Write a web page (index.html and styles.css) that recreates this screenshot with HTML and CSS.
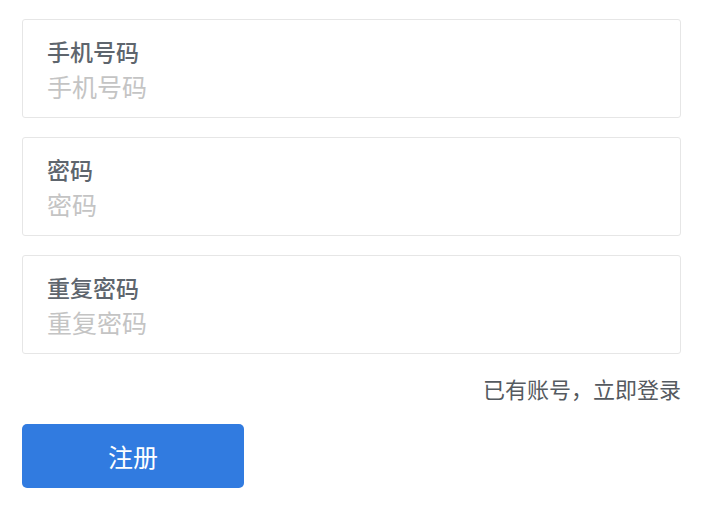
FILE: index.html
```html
<!DOCTYPE html>
<html lang="zh-CN">
<head>
    <meta charset="UTF-8">
    <meta name="viewport" content="width=device-width, initial-scale=1.0">
    <title>注册</title>
    <link rel="stylesheet" href="styles.css">
</head>
<body>

    <form class="register">
        <label class="field">
            <span class="field-label">手机号码</span>
            <input type="text" placeholder="手机号码">
        </label>
        <label class="field">
            <span class="field-label">密码</span>
            <input type="password" placeholder="密码">
        </label>
        <label class="field">
            <span class="field-label">重复密码</span>
            <input type="password" placeholder="重复密码">
        </label>

        <div class="login-link">已有账号，立即登录</div>

        <button type="button">注册</button>
    </form>

</body>
</html>
```

FILE: styles.css
```css
body {
    margin: 0;
    background: #fff;
    font-family: "Noto Sans CJK SC", "Noto Sans", sans-serif;
}
.register {
    width: 659px;
    padding: 19px 0 0 22px;
}
.field {
    display: flex;
    flex-direction: column;
    border: 1px solid #e6e6e6;
    border-radius: 3px;
    padding: 16px 24px 11px;
    margin-bottom: 19px;
}
.field-label {
    font-size: 23px;
    font-weight: 500;
    line-height: 30px;
    color: #5e656d;
}
.field input {
    border: none;
    outline: none;
    padding: 0;
    font-family: inherit;
    font-size: 25px;
    line-height: 40px;
    height: 40px;
    color: #333;
}
.field input::placeholder { color: #c4c4c4; }
.login-link {
    text-align: right;
    font-size: 22px;
    color: #555a60;
    line-height: 30px;
}
button {
    margin-top: 21px;
    width: 222px;
    height: 64px;
    border: none;
    border-radius: 5px;
    background: #317be0;
    color: #fff;
    font-family: inherit;
    font-size: 25px;
    cursor: pointer;
}
```
